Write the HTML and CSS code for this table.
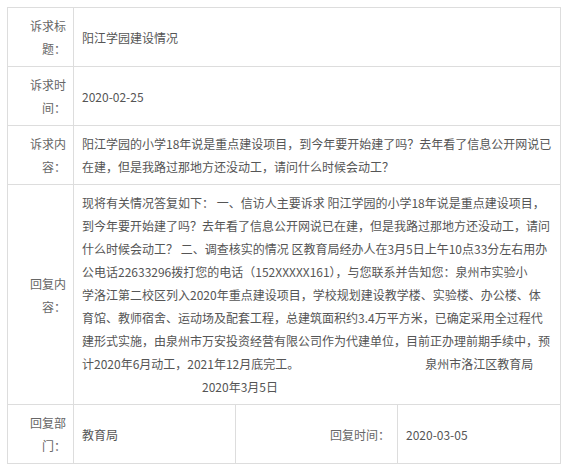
FILE: index.html
```html
<!DOCTYPE html>
<html>
<head>
    <meta charset="utf-8">
    <title>诉求详情</title>
    <link rel="stylesheet" href="styles.css">
</head>
<body>
    <div class="detail-box">
        <table class="detail-table">
            <colgroup>
                <col class="col-label">
                <col class="col-wide">
                <col class="col-wide">
                <col class="col-last">
            </colgroup>
            <tr>
                <td class="label">诉求标题：</td>
                <td colspan="3">阳江学园建设情况</td>
            </tr>
            <tr>
                <td class="label">诉求时间：</td>
                <td colspan="3">2020-02-25</td>
            </tr>
            <tr>
                <td class="label">诉求内容：</td>
                <td colspan="3">阳江学园的小学18年说是重点建设项目，到今年要开始建了吗？去年看了信息公开网说已在建，但是我路过那地方还没动工，请问什么时候会动工？</td>
            </tr>
            <tr>
                <td class="label">回复内容：</td>
                <td colspan="3">现将有关情况答复如下： 一、信访人主要诉求 阳江学园的小学18年说是重点建设项目，到今年要开始建了吗？去年看了信息公开网说已在建，但是我路过那地方还没动工，请问什么时候会动工？ 二、调查核实的情况 区教育局经办人在3月5日上午10点33分左右用办公电话22633296拨打您的电话（152XXXXX161），与您联系并告知您：泉州市实验小<br>学洛江第二校区列入2020年重点建设项目，学校规划建设教学楼、实验楼、办公楼、体<br>育馆、教师宿舍、运动场及配套工程，总建筑面积约3.4万平方米，已确定采用全过程代<br>建形式实施，由泉州市万安投资经营有限公司作为代建单位，目前正办理前期手续中，预<br>计2020年6月动工，2021年12月底完工。　　　　　　　　　　　泉州市洛江区教育局<br>　　　　　　　　　　2020年3月5日</td>
            </tr>
            <tr>
                <td class="label">回复部门：</td>
                <td>教育局</td>
                <td class="label">回复时间：</td>
                <td>2020-03-05</td>
            </tr>
        </table>
    </div>
</body>
</html>
```

FILE: styles.css
```css
body { margin: 0; background: #fff; font-family: "Noto Sans CJK SC", "Microsoft YaHei", sans-serif; }
.detail-box { padding: 7px; }
.detail-table {
    width: 553px;
    border-collapse: collapse;
    table-layout: fixed;
    font-size: 12px;
    line-height: 23px;
    color: #555;
}
.col-label { width: 66px; }
.col-wide { width: 162px; }
.col-last { width: 163px; }
.detail-table td {
    border: 1px solid #ddd;
    padding: 6px 8px;
    vertical-align: middle;
    word-break: break-all;
}
.detail-table td.label {
    text-align: right;
    padding: 6px 7px 6px 12px;
    color: #666;
}
```
